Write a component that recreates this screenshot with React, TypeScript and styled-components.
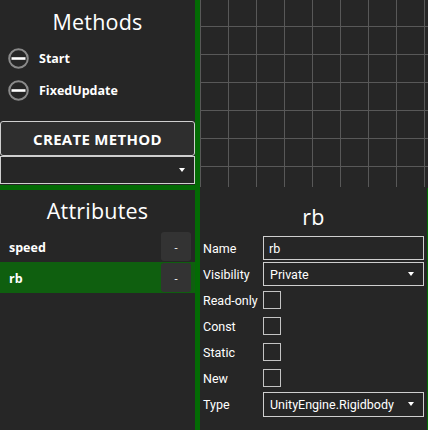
import React from "react";
import styled, { createGlobalStyle } from "styled-components";

const GlobalStyle = createGlobalStyle`
  html, body { margin: 0; padding: 0; background: #262626; }
  * { box-sizing: border-box; }
`;

const GREEN = "#036a04";
const SELECTED = "#0f5f0f";
const FONT = `"Open Sans", "Noto Sans", "Liberation Sans", sans-serif`;
const FORM_FONT = `Roboto, "Open Sans", "Liberation Sans", sans-serif`;

const Page = styled.div`
  width: 428px;
  height: 430px;
  display: flex;
  background: #262626;
  color: #ffffff;
  font-family: ${FONT};
  overflow: hidden;
`;

const LeftColumn = styled.div`
  width: 195px;
  display: flex;
  flex-direction: column;
`;

const VSplitter = styled.div`
  width: 5px;
  background: ${GREEN};
`;

const HSplitter = styled.div`
  height: 5px;
  background: ${GREEN};
`;

const RightColumn = styled.div`
  flex: 1;
  display: flex;
  flex-direction: column;
`;

const MethodsPanel = styled.div`
  height: 185px;
  display: flex;
  flex-direction: column;
`;

const PanelTitle = styled.div<{ $height: number; $pad?: number }>`
  height: ${(p) => p.$height}px;
  padding-top: ${(p) => p.$pad ?? 0}px;
  display: flex;
  align-items: center;
  justify-content: center;
  font-size: 21.5px;
  font-weight: 400;
  letter-spacing: 0.2px;
`;

const MethodList = styled.div`
  display: flex;
  flex-direction: column;
`;

const MethodRow = styled.div`
  height: 32px;
  display: flex;
  align-items: center;
  gap: 10px;
  padding-left: 8px;
  font-size: 12.5px;
  font-weight: 700;
`;

const CreateButton = styled.button`
  margin-top: 15px;
  height: 35px;
  width: 195px;
  background: #2e2e2e;
  border: 1px solid #cfcfcf;
  border-radius: 3px;
  color: #ffffff;
  font-family: ${FONT};
  font-size: 15px;
  font-weight: 700;
  letter-spacing: 0.3px;
  padding: 0;
`;

const ComboBox = styled.div<{ $width: number; $height: number }>`
  width: ${(p) => p.$width}px;
  height: ${(p) => p.$height}px;
  border: 1px solid #cfcfcf;
  background: #262626;
  display: flex;
  align-items: center;
  justify-content: space-between;
  padding: 0 9px 0 6px;
  font-family: ${FORM_FONT};
  font-size: 12.5px;
  color: #ffffff;
`;

const Arrow = styled.span`
  width: 0;
  height: 0;
  border-left: 3.5px solid transparent;
  border-right: 3.5px solid transparent;
  border-top: 4px solid #ffffff;
  margin-left: auto;
`;

const AttributesPanel = styled.div`
  flex: 1;
  display: flex;
  flex-direction: column;
`;

const AttrRow = styled.div<{ $selected?: boolean }>`
  height: 31px;
  display: flex;
  align-items: center;
  justify-content: space-between;
  padding: 0 4px 0 9px;
  background: ${(p) => (p.$selected ? SELECTED : "transparent")};
  font-size: 12.5px;
  font-weight: 700;
`;

const AttrName = styled.span`
  padding-top: 2px;
`;

const RemoveButton = styled.div`
  width: 30px;
  height: 29px;
  border-radius: 3px;
  background: #333333;
  display: flex;
  align-items: center;
  justify-content: center;
  font-size: 11px;
  font-weight: 400;
`;

const GridCanvas = styled.div`
  height: 188px;
  background-color: #262626;
  background-image: linear-gradient(to right, #585858 1px, transparent 1px),
    linear-gradient(to bottom, #585858 1px, transparent 1px);
  background-size: 28px 28px;
  background-position: 0 26px;
  border-bottom: 1px solid #262626;
`;

const DetailsPanel = styled.div`
  flex: 1;
  display: flex;
  flex-direction: column;
  border-right: 1px solid ${GREEN};
`;

const Form = styled.div`
  display: grid;
  grid-template-columns: 60px 161px;
  grid-auto-rows: 26px;
  padding-left: 3px;
  font-family: ${FORM_FONT};
`;

const Label = styled.div`
  display: flex;
  align-items: center;
  font-size: 12.5px;
`;

const Cell = styled.div`
  display: flex;
  align-items: center;
`;

const TextInput = styled.div`
  width: 161px;
  height: 24px;
  border: 1px solid #cfcfcf;
  display: flex;
  align-items: center;
  padding-left: 5px;
  font-size: 12.5px;
`;

const CheckBox = styled.div`
  width: 18px;
  height: 18px;
  border: 1px solid #c4c4c4;
`;

const MinusIcon = () => (
  <svg width="21" height="21" viewBox="0 0 21 21">
    <circle cx="10.5" cy="10.5" r="9.3" fill="none" stroke="#8a8a8a" strokeWidth="2" />
    <rect x="3.5" y="9.2" width="14" height="2.6" fill="#ffffff" />
  </svg>
);

const methods = ["Start", "FixedUpdate"];
const attributes = [
  { name: "speed", selected: false },
  { name: "rb", selected: true },
];

export default function App() {
  return (
    <>
      <GlobalStyle />
      <Page>
        <LeftColumn>
          <MethodsPanel>
            <PanelTitle $height={42}>Methods</PanelTitle>
            <MethodList>
              {methods.map((m) => (
                <MethodRow key={m}>
                  <MinusIcon />
                  {m}
                </MethodRow>
              ))}
            </MethodList>
            <CreateButton>CREATE METHOD</CreateButton>
            <ComboBox $width={195} $height={28}>
              <Arrow />
            </ComboBox>
          </MethodsPanel>
          <HSplitter />
          <AttributesPanel>
            <PanelTitle $height={41}>Attributes</PanelTitle>
            {attributes.map((a) => (
              <AttrRow key={a.name} $selected={a.selected}>
                <AttrName>{a.name}</AttrName>
                <RemoveButton>-</RemoveButton>
              </AttrRow>
            ))}
          </AttributesPanel>
        </LeftColumn>
        <VSplitter />
        <RightColumn>
          <GridCanvas />
          <DetailsPanel>
            <PanelTitle $height={47} $pad={10}>rb</PanelTitle>
            <Form>
              <Label>Name</Label>
              <Cell>
                <TextInput>rb</TextInput>
              </Cell>
              <Label>Visibility</Label>
              <Cell>
                <ComboBox $width={161} $height={24}>
                  Private
                  <Arrow />
                </ComboBox>
              </Cell>
              {["Read-only", "Const", "Static", "New"].map((l) => (
                <React.Fragment key={l}>
                  <Label>{l}</Label>
                  <Cell>
                    <CheckBox />
                  </Cell>
                </React.Fragment>
              ))}
              <Label>Type</Label>
              <Cell>
                <ComboBox $width={161} $height={25}>
                  UnityEngine.Rigidbody
                  <Arrow />
                </ComboBox>
              </Cell>
            </Form>
          </DetailsPanel>
        </RightColumn>
      </Page>
    </>
  );
}
